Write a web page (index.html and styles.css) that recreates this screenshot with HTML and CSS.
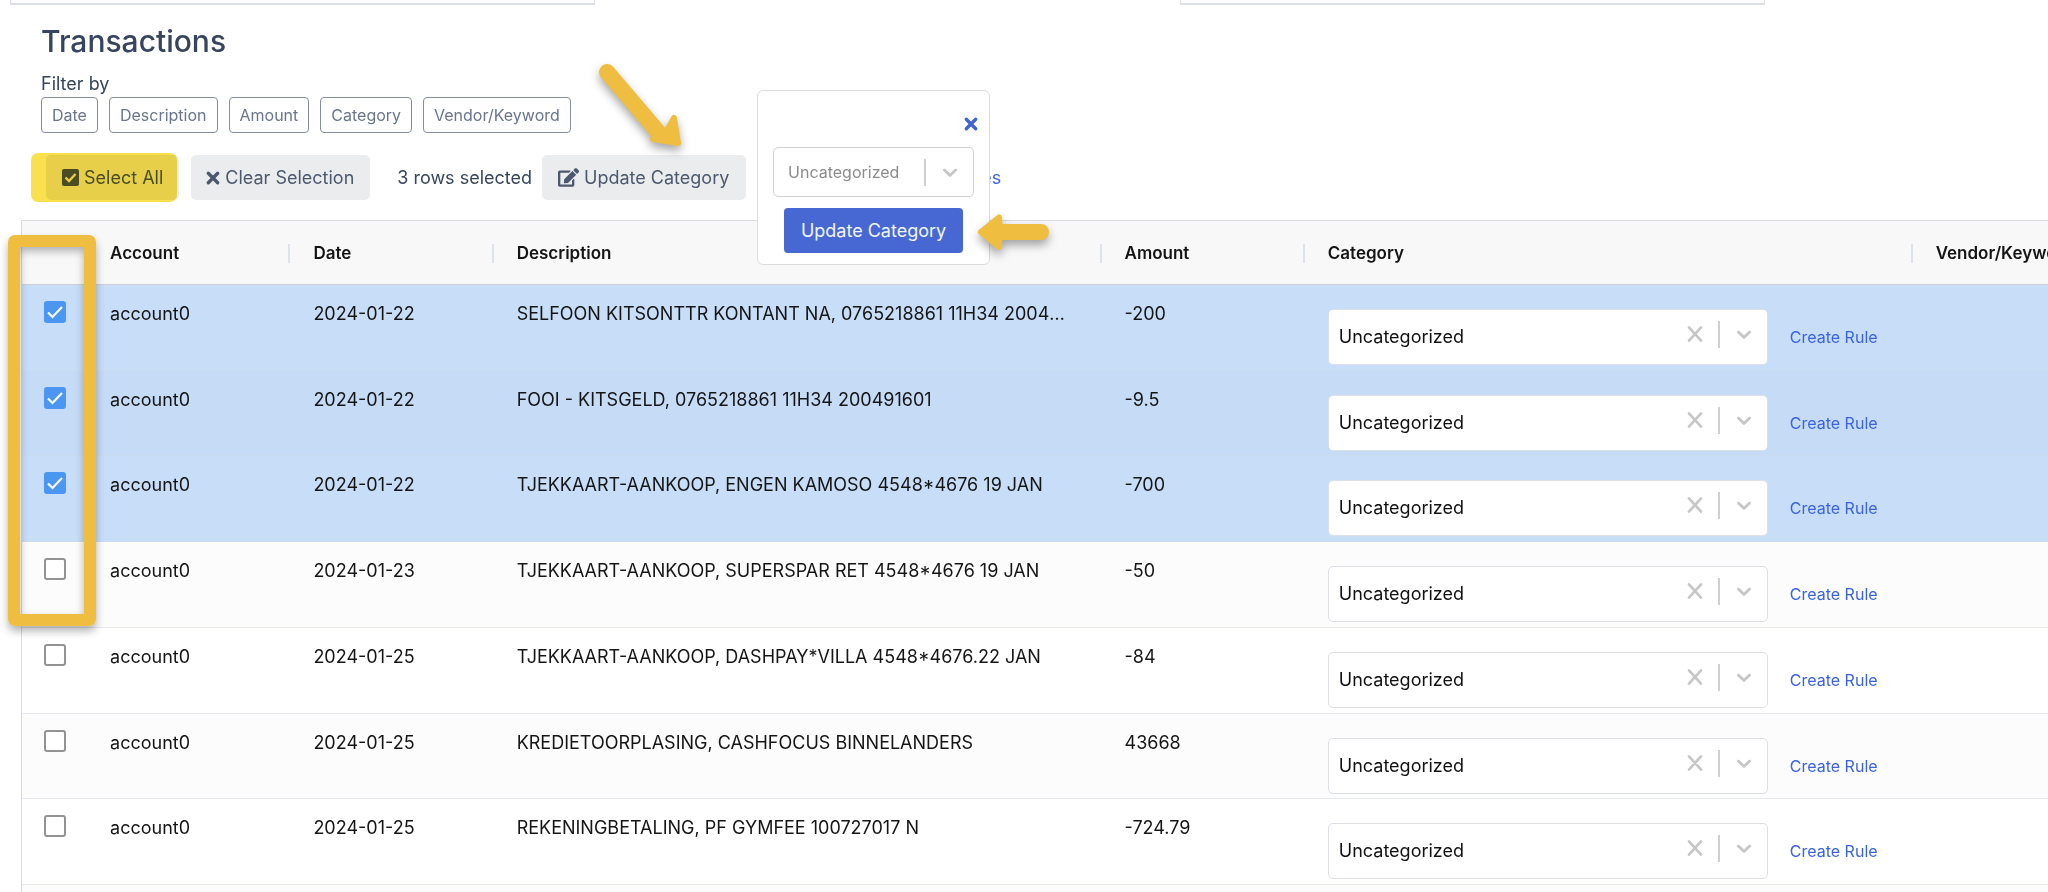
FILE: index.html
```html
<!DOCTYPE html>
<html lang="en">
<head>
<meta charset="utf-8">
<title>Transactions</title>
<link rel="stylesheet" href="styles.css">
</head>
<body>
<svg class="defs" aria-hidden="true">
  <symbol id="chevron" viewBox="0 0 20 20"><path d="M4.516 7.548c0.436-0.446 1.043-0.481 1.576 0l3.908 3.747 3.908-3.747c0.533-0.481 1.141-0.446 1.574 0 0.436 0.445 0.408 1.197 0 1.615-0.406 0.418-4.695 4.502-4.695 4.502-0.217 0.223-0.502 0.335-0.787 0.335s-0.57-0.112-0.789-0.335c0 0-4.287-4.084-4.695-4.502s-0.436-1.17 0-1.615z"/></symbol>
  <symbol id="cross" viewBox="0 0 20 20"><path d="M4.500 4 15.500 16M15.500 4 4.500 16" fill="none" stroke="#c6c6c6" stroke-width="2.400" stroke-linecap="round"/></symbol>
  <symbol id="times" viewBox="0 0 16 16"><path d="M3.300 3.300 12.700 12.700M12.700 3.300 3.300 12.700" fill="none" stroke="currentColor" stroke-width="3.400" stroke-linecap="round"/></symbol>
</svg>

<div class="cards"><div class="card"></div><div class="card"></div></div>

<main class="page">
  <h1>Transactions</h1>
  <p class="filter-label" id="filter-label">Filter by</p>
  <div class="filters" role="group" aria-labelledby="filter-label">
    <button>Date</button><button>Description</button><button>Amount</button><button>Category</button><button>Vendor/Keyword</button>
  </div>

  <div class="toolbar">
    <div class="highlighted">
      <button class="action select-all">
        <svg width="17" height="17" viewBox="0 0 17 17"><rect width="17" height="17" rx="2" fill="currentColor"/><path d="M3.500 8.500 7 12l6.500-7" fill="none" stroke="#ebecee" stroke-width="2.400"/></svg>
        Select All
      </button>
    </div>
    <button class="action clear">
      <svg width="16" height="16"><use href="#times"/></svg>
      Clear Selection
    </button>
    <span class="count">3 rows selected</span>
    <div class="anchor">
      <button class="action update">
        <svg width="21" height="19" viewBox="0 0 576 512"><path fill="currentColor" d="M402.600 83.200l90.200 90.200c3.800 3.800 3.800 10 0 13.800L274.400 405.600l-92.800 10.300c-12.400 1.400-22.900-9.100-21.500-21.500l10.300-92.800L388.800 83.200c3.800-3.800 10-3.800 13.800 0zm162-22.900l-48.800-48.800c-15.200-15.200-39.900-15.200-55.200 0l-35.400 35.400c-3.800 3.800-3.800 10 0 13.800l90.200 90.200c3.800 3.800 10 3.800 13.800 0l35.400-35.400c15.200-15.300 15.200-40 0-55.200zM384 346.200V448H64V128h229.800c3.200 0 6.200-1.300 8.500-3.500l40-40c7.600-7.600 2.200-20.500-8.500-20.500H48C21.500 64 0 85.500 0 112v352c0 26.500 21.500 48 48 48h352c26.500 0 48-21.500 48-48V306.200c0-10.700-12.900-16-20.500-8.500l-40 40c-2.200 2.300-3.500 5.300-3.500 8.500z"/></svg>
        Update Category
      </button>
      <svg class="arrow arrow-down" width="100" height="110" viewBox="0 0 100 110"><path d="M26 22 78 83" stroke="#efbd40" stroke-width="16" stroke-linecap="round"/><path d="M93 68 97 93 72 89 81 84 87 79Z" fill="#efbd40" stroke="#efbd40" stroke-width="6" stroke-linejoin="round"/></svg>
      <form class="popup">
        <button type="button" class="close" aria-label="Close"><svg width="16" height="16"><use href="#times"/></svg></button>
        <div class="combo small">
          <select aria-label="New category"><option>Uncategorized</option></select>
          <div class="tools"><i class="bar"></i><svg class="chev" width="24" height="24"><use href="#chevron"/></svg></div>
        </div>
        <button type="button" class="primary">Update Category</button>
        <svg class="arrow arrow-left" width="96" height="60" viewBox="0 0 96 60"><path d="M30 28h43" stroke="#efbd40" stroke-width="16" stroke-linecap="round"/><path d="M13 28 31 13.500 32 28 31 43Z" fill="#efbd40" stroke="#efbd40" stroke-width="6" stroke-linejoin="round"/></svg>
      </form>
    </div>
    <a class="rules" href="#">es</a>
  </div>
</main>

<div class="grid">
  <div class="frame"></div>
  <table>
    <colgroup><col class="c-check"><col class="c-short"><col class="c-short"><col class="c-long"><col class="c-short"><col class="c-long"><col class="c-short"></colgroup>
    <thead><tr><td></td><th scope="col"><div>Account</div></th><th scope="col"><div>Date</div></th><th scope="col"><div>Description</div></th><th scope="col"><div>Amount</div></th><th scope="col"><div>Category</div></th><th scope="col"><div>Vendor/Keyword</div></th></tr></thead>
    <tbody id="rows"></tbody>
  </table>
</div>
<script src="script.js"></script>
</body>
</html>
```
FILE: styles.css
```css
* { box-sizing: border-box; }

body {
  margin: 0;
  height: 100vh;
  overflow: hidden;
  background: #fff;
  color: #36445d;
  font: 18px/24px Inter, "Liberation Sans", sans-serif;
}

button, select, input { font: inherit; color: inherit; margin: 0; }
button { cursor: pointer; }
a { color: #3b63e0; text-decoration: none; }
.defs { position: absolute; width: 0; height: 0; }

.cards { display: flex; gap: 28.7%; padding-left: 10px; }
.card {
  width: 28.7%;
  height: 5px;
  background: #fcfcfe;
  border: solid #dcdfe4;
  border-width: 0 1px 2px;
}

.page { padding: 18px 0 0 41px; }
h1 { margin: 0; font-size: 30px; line-height: 36px; font-weight: 500; }
.filter-label { margin: 13px 0 0; }

.filters { display: flex; gap: 11px; margin-top: 1px; }
.filters button {
  height: 36px;
  padding: 0 10px;
  border: 1px solid #858e9e;
  border-radius: 4px;
  background: #fff;
  color: #69758c;
  font-size: 16px;
}

.toolbar { display: flex; align-items: center; margin: 22px 0 20px 5px; }
.action {
  display: flex;
  align-items: center;
  height: 45px;
  padding: 0 16px;
  gap: 5px;
  border: 0;
  border-radius: 5px;
  background: #ebecee;
  color: #4b586e;
  white-space: nowrap;
}
.highlighted { position: relative; margin-right: 12px; }
.highlighted::after {
  content: "";
  position: absolute;
  inset: -2px 2px -2px -15px;
  border-radius: 7px;
  background: #fbe04e;
  mix-blend-mode: multiply;
  pointer-events: none;
}
.clear { gap: 4px; padding: 0 16px 0 14px; }
.count { margin: 0 10px 0 27px; }
.update { padding-right: 17px; }
.anchor { position: relative; }
.rules { margin-left: 235px; }

.popup {
  position: absolute;
  left: 215px;
  top: -65px;
  z-index: 2;
  display: flex;
  flex-direction: column;
  width: 233px;
  padding: 25px 15px 11px;
  border: 1px solid #dadcdf;
  border-radius: 6px;
  background: #fff;
}
.close {
  display: flex;
  align-self: flex-end;
  margin-right: -5px;
  padding: 0;
  border: 0;
  background: none;
  color: #3f63d2;
}
.primary {
  align-self: center;
  height: 45px;
  margin-top: 11px;
  padding: 0 17px;
  border: 0;
  border-radius: 4px;
  background: #4768d3;
  color: #f2f5fd;
  white-space: nowrap;
}

.arrow { position: absolute; fill: none; filter: drop-shadow(0 5px 5px rgba(0, 0, 0, .35)); pointer-events: none; }
.arrow-down { left: 39px; top: -105px; }
.arrow-left { left: 210px; top: 113px; }

/* Drop-down with its indicators stacked over the right edge */
.combo { display: grid; width: 440px; height: 56px; }
.combo > * { grid-area: 1 / 1; }
.combo select {
  appearance: none;
  padding: 0 10px;
  border: 1px solid #dcdfe4;
  border-radius: 5px;
  background: #fff;
  color: #111;
}
.tools {
  display: flex;
  align-items: center;
  justify-self: end;
  padding: 0 12px 6px 0;
  pointer-events: none;
}
.tools svg { display: block; fill: #c6c6c6; }
.wipe { padding: 0; border: 0; background: none; pointer-events: auto; }
.bar { width: 2px; height: 27px; margin: 0 12px 0 12px; background: #cfcfcf; }
.small { width: auto; height: 50px; margin-top: 15px; }
.small select { padding: 0 14px; border-color: #d0d2d5; color: #8b8b8b; font-size: 16px; }
.small .tools { padding-bottom: 0; }

.grid { position: relative; margin-left: 21px; border: solid #d8dce1; border-width: 1px 0 0 1px; }
table { width: 2095px; table-layout: fixed; border-spacing: 0; color: #151515; }
.c-check { width: 66px; }
.c-short { width: 203px; }
.c-long { width: 607px; }
td, th { padding: 0 22px; text-align: left; vertical-align: top; }
thead { background: #f8f8f8; }
thead th, thead td { height: 64px; border-bottom: 1px solid #cdd0d4; vertical-align: middle; }
th { padding: 2px 1px 0 22px; font-size: 17px; font-weight: 600; }
th div { border-right: 2px solid #dde2ec; line-height: 19px; }
tbody td {
  height: 86px;
  padding-right: 29px;
  border-bottom: 1px solid #e6e9ef;
  line-height: 58px;
  overflow: hidden;
  white-space: nowrap;
  text-overflow: ellipsis;
}
tbody td:first-child { padding-right: 0; }
tbody tr:nth-child(even) { background: #fcfcfc; }
tbody tr:nth-child(4n+2) td { height: 85px; }
tbody tr.on { background: #c8def8; }
tbody tr.on:nth-child(even) { background: #c5dbf6; }
tbody tr.on td { border-color: #cbdcf0; }
tbody td.category { padding-top: 24px; line-height: 24px; }
.category > div { display: flex; align-items: center; gap: 22px; }
.category a { font-size: 16px; }

.tick {
  appearance: none;
  display: block;
  width: 22px;
  height: 22px;
  margin-top: 16px;
  border: 2px solid #939393;
  border-radius: 3px;
  background: #fff;
}
.tick:checked {
  border-color: #4a96f0;
  background: #4a96f0 url("data:image/svg+xml,%3Csvg xmlns='http://www.w3.org/2000/svg' viewBox='0 0 18 18'%3E%3Cpath d='M2 9.500 6.500 14 16 4' fill='none' stroke='white' stroke-width='2.200'/%3E%3C/svg%3E");
}

.frame {
  position: absolute;
  left: -14px;
  top: 14px;
  width: 88px;
  height: 391px;
  border: 12px solid #efbd40;
  border-radius: 7px;
  box-shadow: 0 5px 8px rgba(0, 0, 0, .3), inset 0 4px 8px rgba(0, 0, 0, .3);
  pointer-events: none;
}
```
FILE: script.js
```js
const rows = [
  ["2024-01-22", "SELFOON KITSONTTR KONTANT NA, 0765218861 11H34 200491601", "-200", true],
  ["2024-01-22", "FOOI - KITSGELD, 0765218861 11H34 200491601", "-9.5", true],
  ["2024-01-22", "TJEKKAART-AANKOOP, ENGEN KAMOSO 4548*4676 19 JAN", "-700", true],
  ["2024-01-23", "TJEKKAART-AANKOOP, SUPERSPAR RET 4548*4676 19 JAN", "-50", false],
  ["2024-01-25", "TJEKKAART-AANKOOP, DASHPAY*VILLA 4548*4676.22 JAN", "-84", false],
  ["2024-01-25", "KREDIETOORPLASING, CASHFOCUS BINNELANDERS", "43668", false],
  ["2024-01-25", "REKENINGBETALING, PF GYMFEE 100727017 N", "-724.79", false]
];

document.getElementById("rows").innerHTML = rows.map(([date, text, amount, on], i) => `
  <tr class="${on ? "on" : ""}">
    <td><input class="tick" type="checkbox" aria-label="Select row ${i + 1}" ${on ? "checked" : ""}></td>
    <td>account0</td><td>${date}</td><td>${text}</td><td>${amount}</td>
    <td class="category"><div>
      <div class="combo">
        <select aria-label="Category"><option>Uncategorized</option></select>
        <div class="tools">
          <button class="wipe" aria-label="Clear category"><svg width="22" height="22"><use href="#cross"/></svg></button>
          <i class="bar"></i>
          <svg class="chev" width="24" height="24"><use href="#chevron"/></svg>
        </div>
      </div>
      <a href="#">Create Rule</a>
    </div></td>
    <td></td>
  </tr>`).join("") + '<tr><td colspan="7"></td></tr>';
```
